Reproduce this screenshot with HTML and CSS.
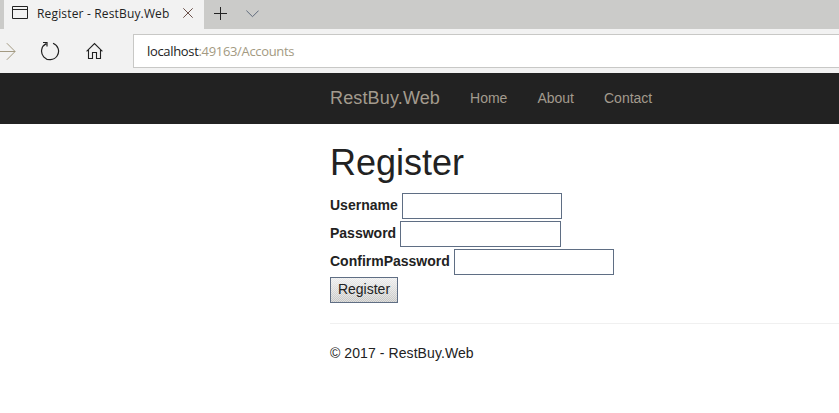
FILE: index.html
```
<!DOCTYPE html>
<html lang="en">
<head>
<meta charset="utf-8">
<title>Register - RestBuy.Web</title>
<link rel="stylesheet" href="styles.css">
</head>
<body>
<div class="tabs">
  <div class="tab">
    <svg class="page-icon" width="16" height="13" viewBox="0 0 16 13"><path d="M.5.5h15v12H.5zM.5 3.5h15"/></svg>
    <span class="tab-title">Register - RestBuy.Web</span>
    <svg class="close" width="10" height="10" viewBox="0 0 10 10"><path d="M.3.3l9.400 9.400M9.700.3L.3 9.700"/></svg>
  </div>
  <svg class="plus" width="13" height="13" viewBox="0 0 13 13"><path d="M6.500 0v13M0 6.500h13"/></svg>
  <svg class="chevron" width="13" height="8" viewBox="0 0 13 8"><path d="M.4.6l6.100 6.100L12.600.6"/></svg>
</div>
<div class="toolbar">
  <svg class="forward" width="16" height="18" viewBox="0 0 16 18"><path d="M0 9.500h15M6.800 1.200l8.300 8.300-8.300 8.300"/></svg>
  <svg class="reload" width="20" height="20" viewBox="0 0 20 20"><path d="M13 2.200A8.500 8.500 0 1 1 6.200 2.600M3 1.500h4v4"/></svg>
  <svg class="home" width="18" height="18" viewBox="0 0 18 18"><path d="M.6 9.400L8.500 1.500l7.900 7.900M2.500 8v8.500h4v-6h4v6h4V8"/></svg>
  <div class="address"><span class="host">localhost</span><span class="path">:49163/Accounts</span></div>
</div>
<nav class="navbar">
  <a class="brand">RestBuy.Web</a>
  <a>Home</a>
  <a>About</a>
  <a>Contact</a>
</nav>
<main>
  <h1>Register</h1>
  <form>
    <div class="row"><label for="u">Username</label><input id="u" type="text"></div>
    <div class="row"><label for="p">Password</label><input id="p" class="wide" type="password"></div>
    <div class="row"><label for="c">ConfirmPassword</label><input id="c" type="password"></div>
    <button type="button">Register</button>
  </form>
  <hr>
  <footer>© 2017 - RestBuy.Web</footer>
</main>
</body>
</html>
```
FILE: styles.css
```
* { box-sizing: border-box; }
body {
  margin: 0;
  height: 413px;
  overflow: hidden;
  background: #fff;
  color: #222;
  font: 14px/20px "Liberation Sans", Arial, sans-serif;
}
svg { flex: none; fill: none; stroke: #222; stroke-width: 1; }
.tabs {
  display: flex;
  height: 29px;
  padding-left: 4px;
  background: #cbcbc9;
}
.tab {
  display: flex;
  width: 200px;
  padding-left: 8px;
  background: #f2f2f2;
}
.page-icon { margin-top: 6px; }
.tab-title {
  width: 146px;
  margin-left: 9px;
  font: 12px/27px "Open Sans", sans-serif;
  letter-spacing: 0.16px;
  white-space: nowrap;
}
.close { margin-top: 8px; stroke: #6b5049; }
.plus { margin: 7px 0 0 10px; }
.chevron { margin: 10px 0 0 19px; stroke: #5f6b7c; }
.toolbar {
  display: flex;
  height: 44px;
  background: #f2f2f2;
}
.forward { margin-top: 13px; stroke: #a39a82; }
.reload { margin: 12px 0 0 24px; stroke-width: 1.2; }
.home { margin: 13px 0 0 26px; stroke-width: 1.1; }
.address {
  flex: 1;
  height: 34px;
  margin: 5px 0 0 29px;
  padding-left: 13px;
  border: 1px solid #c8c8c6;
  border-right: 0;
  background: #fff;
  font: 13px/33px "Open Sans", sans-serif;
  letter-spacing: -0.33px;
}
.path { color: #a39a82; }
.navbar {
  display: flex;
  gap: 30px;
  height: 51px;
  padding-left: 330px;
  background: #222;
  color: #a39b8e;
  line-height: 50px;
}
.brand { font-size: 18px; letter-spacing: 0.15px; }
main { padding-left: 330px; }
h1 {
  margin: 19px 0 10px;
  font-size: 36px;
  font-weight: 400;
  line-height: 39px;
}
.row {
  display: flex;
  gap: 4px;
  height: 28px;
  line-height: 26px;
}
label { font-weight: 700; }
input {
  width: 160px;
  height: 26px;
  margin-top: 1px;
  padding: 1px 4px;
  border: 1px solid #5f6e84;
  background: #fff;
}
.wide { width: 161px; }
button {
  display: block;
  width: 68px;
  height: 26px;
  margin-top: 1px;
  padding: 0 0 2px;
  border: 1px solid #5f6e84;
  background:
    repeating-conic-gradient(rgba(255, 255, 255, 0.45) 0 25%, transparent 0 50%) 0 0 / 2px 2px,
    linear-gradient(#ececec, #c4c4c2);
  color: #222;
  font: 14px/22px "Liberation Sans", Arial, sans-serif;
}
hr {
  height: 1px;
  margin: 20px 0 19px;
  border: 0;
  background: #f0f0f0;
}
footer { letter-spacing: 0.08px; }
```
